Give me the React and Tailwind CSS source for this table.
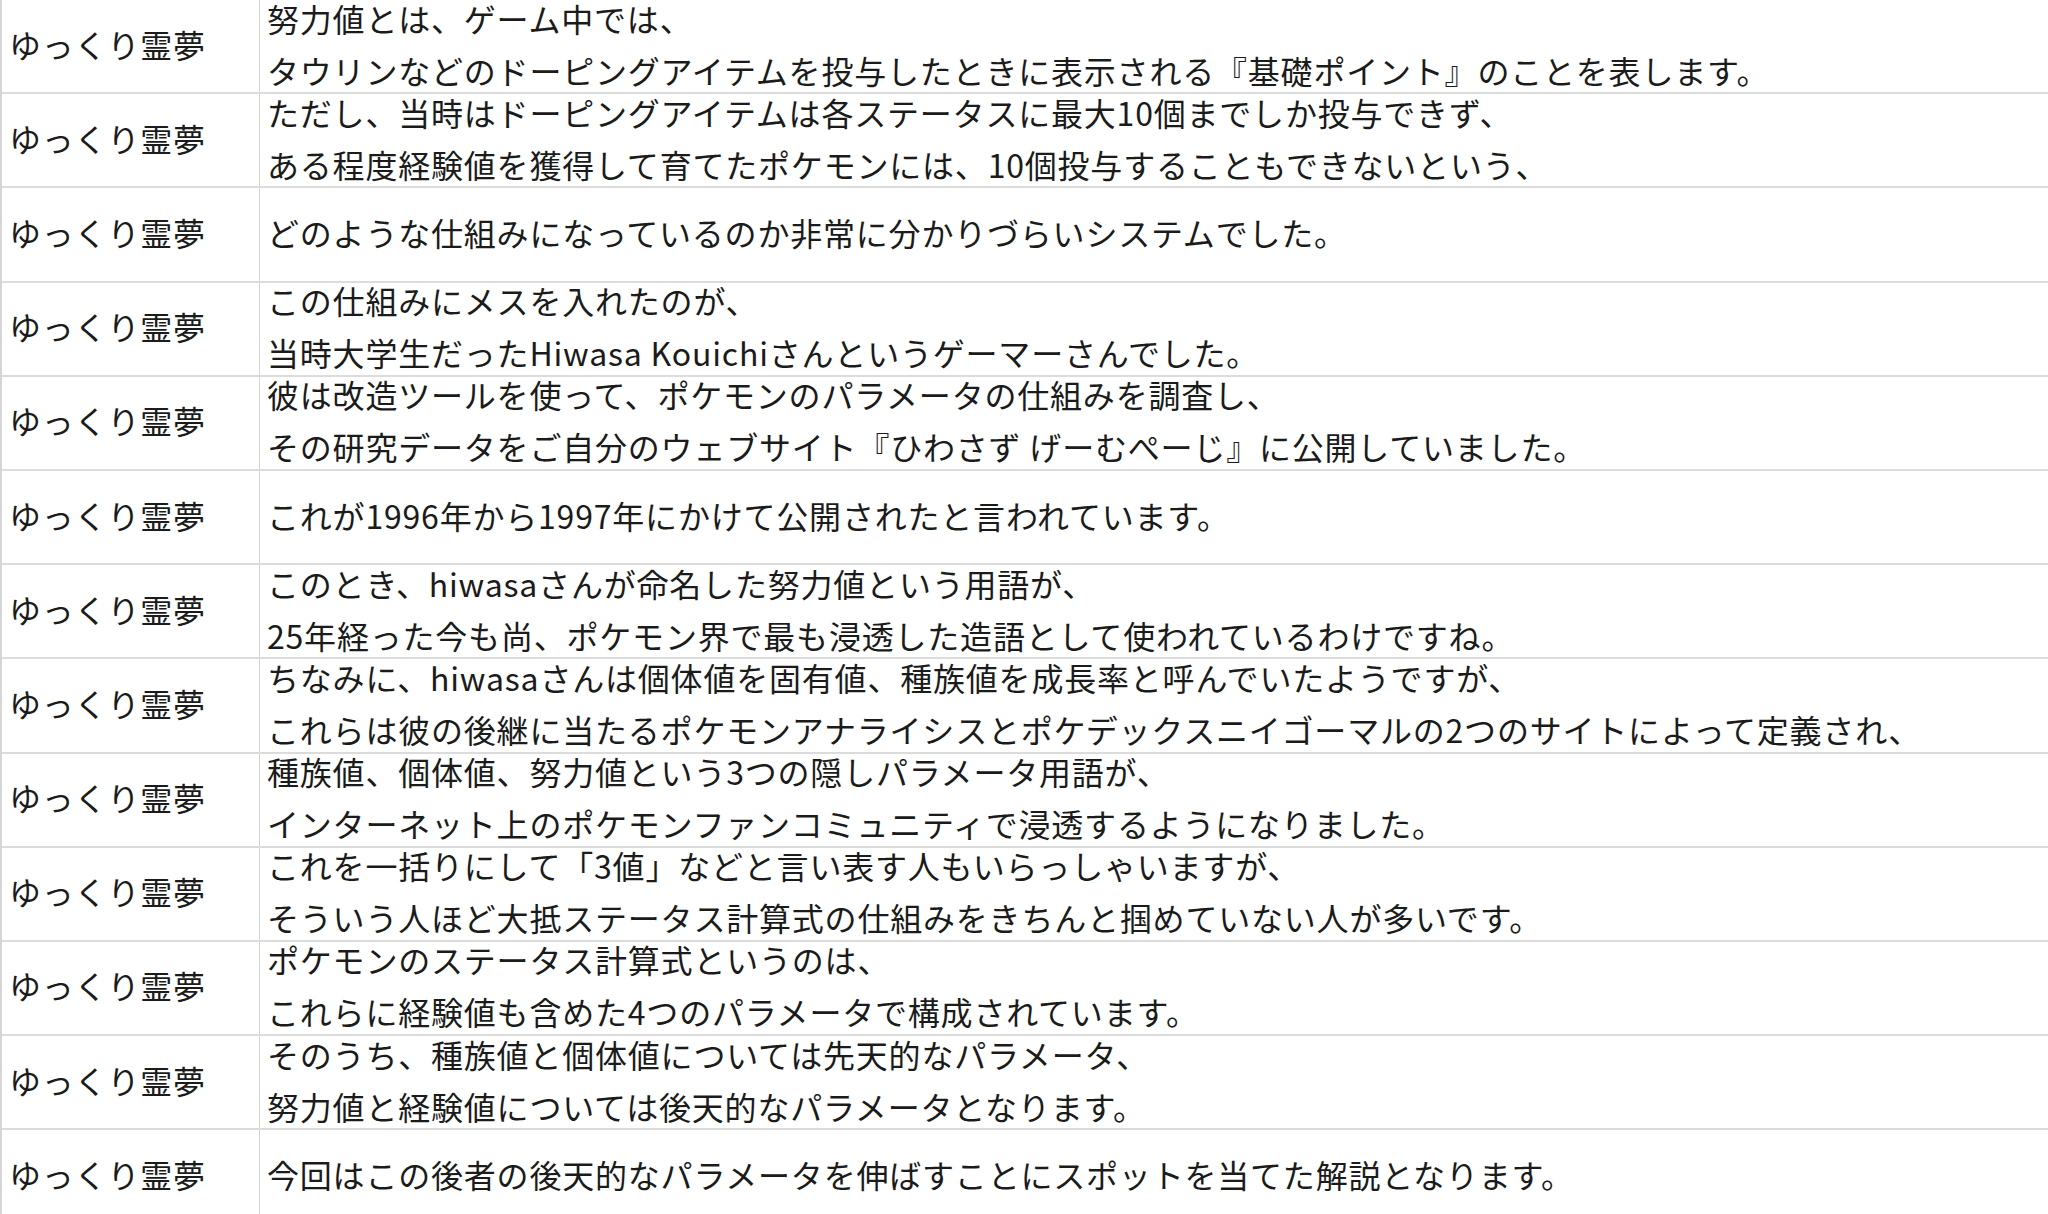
const rows = [
  ["努力値とは、ゲーム中では、", "タウリンなどのドーピングアイテムを投与したときに表示される『基礎ポイント』のことを表します。"],
  ["ただし、当時はドーピングアイテムは各ステータスに最大10個までしか投与できず、", "ある程度経験値を獲得して育てたポケモンには、10個投与することもできないという、"],
  ["どのような仕組みになっているのか非常に分かりづらいシステムでした。"],
  ["この仕組みにメスを入れたのが、", "当時大学生だったHiwasa Kouichiさんというゲーマーさんでした。"],
  ["彼は改造ツールを使って、ポケモンのパラメータの仕組みを調査し、", "その研究データをご自分のウェブサイト『ひわさず げーむぺーじ』に公開していました。"],
  ["これが1996年から1997年にかけて公開されたと言われています。"],
  ["このとき、hiwasaさんが命名した努力値という用語が、", "25年経った今も尚、ポケモン界で最も浸透した造語として使われているわけですね。"],
  ["ちなみに、hiwasaさんは個体値を固有値、種族値を成長率と呼んでいたようですが、", "これらは彼の後継に当たるポケモンアナライシスとポケデックスニイゴーマルの2つのサイトによって定義され、"],
  ["種族値、個体値、努力値という3つの隠しパラメータ用語が、", "インターネット上のポケモンファンコミュニティで浸透するようになりました。"],
  ["これを一括りにして「3値」などと言い表す人もいらっしゃいますが、", "そういう人ほど大抵ステータス計算式の仕組みをきちんと掴めていない人が多いです。"],
  ["ポケモンのステータス計算式というのは、", "これらに経験値も含めた4つのパラメータで構成されています。"],
  ["そのうち、種族値と個体値については先天的なパラメータ、", "努力値と経験値については後天的なパラメータとなります。"],
  ["今回はこの後者の後天的なパラメータを伸ばすことにスポットを当てた解説となります。"],
];

export default function App() {
  return (
    <div className="w-[2048px] h-[1214px] overflow-hidden bg-white text-[#1b1b1b] font-['Noto_Sans_CJK_JP',sans-serif] text-[32px] leading-[52px] tracking-[0.8px] border-l-2 border-[#d6d6d6]">
      {rows.map((lines, i) => (
        <div key={i} className="flex h-[94.2px] border-b-2 border-[#dcdcdc]">
          {/* 話者 */}
          <div className="w-[258px] shrink-0 flex items-center pl-[7px] pb-[5px] border-r border-[#d4d4d4] whitespace-nowrap">
            ゆっくり霊夢
          </div>
          {/* セリフ */}
          <div className="flex-1 flex flex-col justify-center pl-[7px] pb-[5px] whitespace-pre">
            {lines.map((l, j) => (
              <div key={j}>{l}</div>
            ))}
          </div>
        </div>
      ))}
    </div>
  );
}
